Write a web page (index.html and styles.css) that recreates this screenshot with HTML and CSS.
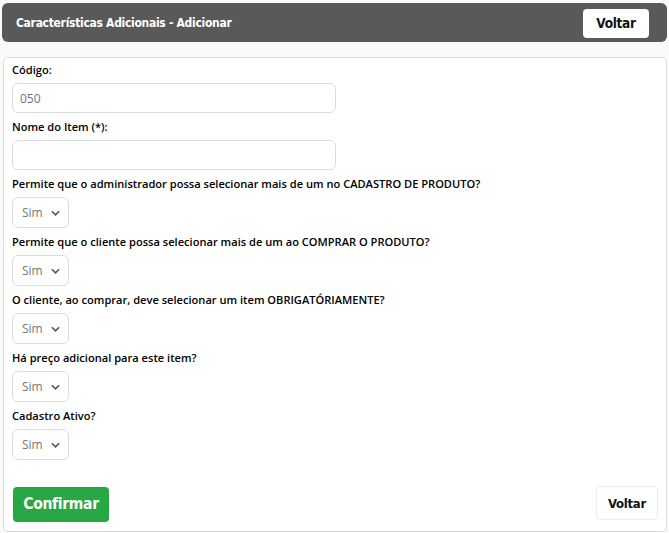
FILE: index.html
```html
<!DOCTYPE html>
<html lang="pt-BR">
<head>
<meta charset="utf-8">
<title>Características Adicionais - Adicionar</title>
<link rel="stylesheet" href="styles.css">
</head>
<body>
<div class="page">
  <header class="topbar">
    <h1 class="title">Características Adicionais - Adicionar</h1>
    <button class="btn-top" type="button">Voltar</button>
  </header>
  <form class="card">
    <div class="field">
      <label class="lbl">Código:</label>
      <input class="inp" type="text" value="050">
    </div>
    <div class="field">
      <label class="lbl">Nome do Item (*):</label>
      <input class="inp" type="text" value="">
    </div>
    <div class="field">
      <label class="lbl">Permite que o administrador possa selecionar mais de um no CADASTRO DE PRODUTO?</label>
      <div class="sel"><span>Sim</span><svg class="chev" viewBox="0 0 10 6" width="9" height="6"><path d="M1 1l4 4 4-4" fill="none" stroke="#555" stroke-width="1.8"/></svg></div>
    </div>
    <div class="field">
      <label class="lbl">Permite que o cliente possa selecionar mais de um ao COMPRAR O PRODUTO?</label>
      <div class="sel"><span>Sim</span><svg class="chev" viewBox="0 0 10 6" width="9" height="6"><path d="M1 1l4 4 4-4" fill="none" stroke="#555" stroke-width="1.8"/></svg></div>
    </div>
    <div class="field">
      <label class="lbl">O cliente, ao comprar, deve selecionar um item OBRIGATÓRIAMENTE?</label>
      <div class="sel"><span>Sim</span><svg class="chev" viewBox="0 0 10 6" width="9" height="6"><path d="M1 1l4 4 4-4" fill="none" stroke="#555" stroke-width="1.8"/></svg></div>
    </div>
    <div class="field">
      <label class="lbl">Há preço adicional para este item?</label>
      <div class="sel"><span>Sim</span><svg class="chev" viewBox="0 0 10 6" width="9" height="6"><path d="M1 1l4 4 4-4" fill="none" stroke="#555" stroke-width="1.8"/></svg></div>
    </div>
    <div class="field">
      <label class="lbl">Cadastro Ativo?</label>
      <div class="sel"><span>Sim</span><svg class="chev" viewBox="0 0 10 6" width="9" height="6"><path d="M1 1l4 4 4-4" fill="none" stroke="#555" stroke-width="1.8"/></svg></div>
    </div>
    <div class="actions">
      <button class="btn-ok" type="button">Confirmar</button>
      <button class="btn-back" type="button">Voltar</button>
    </div>
  </form>
</div>
</body>
</html>
```
FILE: styles.css
```css
* { box-sizing: border-box; }
html, body { margin: 0; padding: 0; }
body {
  background: #fafafa;
  font-family: "Open Sans", "Noto Sans", sans-serif;
  color: #111;
}
.page {
  padding: 3px 2px 0 2px;
  display: flex;
  flex-direction: column;
  gap: 15px;
}
.topbar {
  height: 39px;
  background: #595959;
  border-radius: 6px;
  display: flex;
  align-items: center;
  justify-content: space-between;
  padding: 0 18px 0 14px;
}
.title {
  margin: 0;
  color: #fff;
  font-family: "DejaVu Sans Condensed", sans-serif;
  font-weight: bold;
  font-size: 12px;
  letter-spacing: -0.3px;
}
.btn-top {
  height: 29px;
  width: 66px;
  background: #fff;
  border: 0;
  border-radius: 4px;
  font-family: "DejaVu Sans Condensed", sans-serif;
  font-weight: bold;
  font-size: 13.5px;
  letter-spacing: -0.3px;
  color: #111;
  padding: 0;
  margin-top: 1px;
}
.card {
  margin: 0 0 0 1px;
  background: #fff;
  border: 1px solid #dcdcdc;
  border-radius: 5px;
  padding: 3px 8px 9px 8px;
  display: flex;
  flex-direction: column;
}
.field {
  display: flex;
  flex-direction: column;
  align-items: flex-start;
  gap: 5px;
  margin-bottom: 5px;
}
.lbl {
  font-weight: 600;
  font-size: 11.1px;
  line-height: 17px;
  color: #000;
}
.inp {
  width: 324px;
  height: 30px;
  border: 1px solid #dcdcdc;
  border-radius: 6px;
  padding: 0 7px;
  font-family: "Open Sans", "Noto Sans", sans-serif;
  font-size: 12px;
  color: #6c757d;
  background: #fff;
}
.sel {
  width: 57px;
  height: 31px;
  border: 1px solid #dcdcdc;
  border-radius: 6px;
  display: flex;
  align-items: center;
  justify-content: space-between;
  padding: 0 8px 0 9px;
  font-size: 12px;
  color: #777;
}
.chev { display: block; }
.actions {
  display: flex;
  justify-content: space-between;
  align-items: center;
  margin-top: 21px;
}
.btn-ok {
  width: 96px;
  height: 35px;
  background: #28a745;
  color: #fff;
  border: 0;
  border-radius: 4px;
  font-family: "DejaVu Sans Condensed", sans-serif;
  font-weight: bold;
  font-size: 15.5px;
  letter-spacing: -0.3px;
  padding: 0;
  margin-left: 1px;
}
.btn-back {
  width: 62px;
  height: 34px;
  background: #fff;
  border: 1px solid #ececec;
  border-radius: 4px;
  font-family: "DejaVu Sans Condensed", sans-serif;
  font-weight: bold;
  font-size: 13px;
  letter-spacing: -0.3px;
  color: #111;
  padding: 0;
  margin-bottom: 2px;
}
```
